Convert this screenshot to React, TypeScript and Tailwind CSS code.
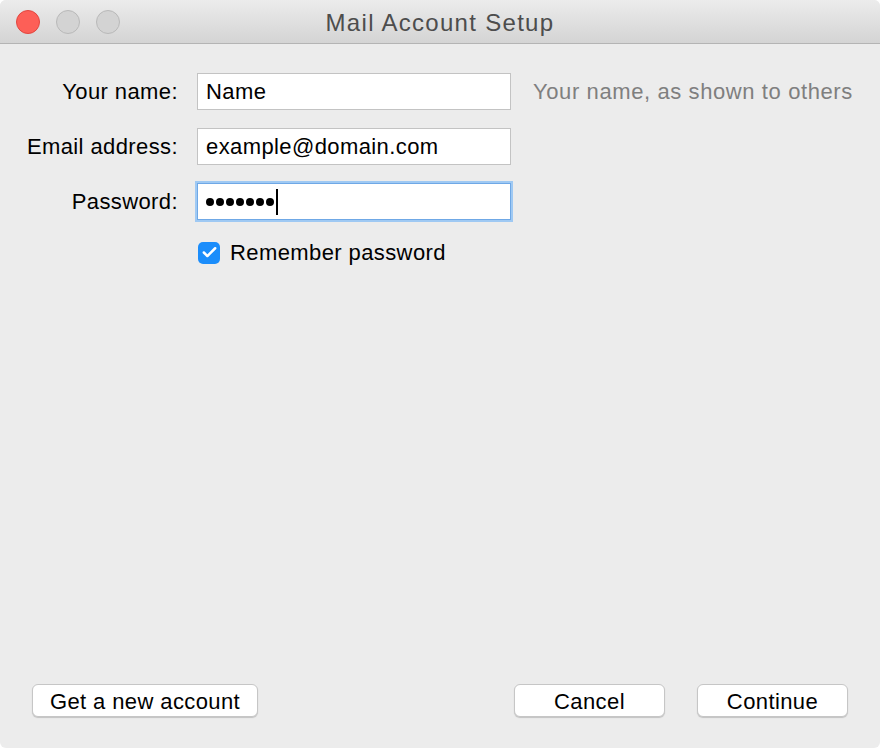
import { Check } from "lucide-react";

const font = { fontFamily: '"Liberation Sans", Arial, sans-serif' };

function Light({ color }: { color: "red" | "grey" }) {
  return (
    <span
      className={`block h-[24px] w-[24px] rounded-full border ${
        color === "red" ? "border-[#e2463f] bg-[#fd5f57]" : "border-[#b9b9b9] bg-[#d3d3d3]"
      }`}
    />
  );
}

function Field({ value }: { value: string }) {
  return (
    <div className="ml-[19px] flex h-[37px] w-[314px] items-center border border-[#c3c3c3] bg-white pl-[8px] text-black">
      {value}
    </div>
  );
}

function MacButton({ label, width }: { label: string; width: string }) {
  return (
    <button
      type="button"
      className={`${width} h-[33px] rounded-[6px] border border-[#c6c6c6] bg-white text-[22px] tracking-[0.4px] text-black shadow-[0_1px_1px_rgba(0,0,0,0.18)]`}
    >
      {label}
    </button>
  );
}

export default function App() {
  return (
    <div className="h-[748px] w-[880px] bg-white" style={font}>
      <div className="flex h-full flex-col overflow-hidden rounded-[6px] bg-[#ececec]">
        <header className="relative flex h-[44px] shrink-0 items-center border-b border-[#b4b4b4] bg-gradient-to-b from-[#ececec] to-[#d4d4d4] pl-[16px]">
          <div className="flex gap-[16px]">
            <Light color="red" />
            <Light color="grey" />
            <Light color="grey" />
          </div>
          <h1 className="absolute inset-x-0 top-[5px] text-center text-[24px] tracking-[1.3px] text-[#4d4d4d]">
            Mail Account Setup
          </h1>
        </header>

        <main className="flex flex-1 flex-col pt-[29px] text-[22px] tracking-[0.4px] text-black">
          <div className="flex flex-col gap-[18px]">
            <div className="flex items-center">
              <label className="w-[178px] text-right">Your name:</label>
              <Field value="Name" />
              <span className="ml-[22px] tracking-[0.6px] text-[#7f7f7f]">Your name, as shown to others</span>
            </div>
            <div className="flex items-center">
              <label className="w-[178px] text-right">Email address:</label>
              <Field value="example@domain.com" />
            </div>
            <div className="flex items-center">
              <label className="w-[178px] text-right">Password:</label>
              <div className="ml-[19px] flex h-[37px] w-[314px] items-center border border-[#6fa8e6] bg-white pl-[8px] shadow-[0_0_0_2px_#9fc9f3]">
                <div className="flex gap-[2px]" aria-label="password">
                  {Array.from({ length: 7 }).map((_, i) => (
                    <span key={i} className="block h-[8px] w-[8px] rounded-full bg-black" />
                  ))}
                </div>
                <span className="ml-[2px] h-[26px] w-[2px] bg-black" />
              </div>
            </div>
          </div>

          <div className="mt-[16px] flex items-center pl-[198px]">
            <span className="flex h-[22px] w-[22px] items-center justify-center rounded-[5px] bg-[#1b8dfb]">
              <Check size={17} strokeWidth={3.5} color="white" />
            </span>
            <span className="ml-[10px]">Remember password</span>
          </div>

          <div className="mt-auto flex items-center px-[32px] pb-[31px]">
            <MacButton label="Get a new account" width="w-[226px]" />
            <div className="ml-auto flex gap-[32px]">
              <MacButton label="Cancel" width="w-[151px]" />
              <MacButton label="Continue" width="w-[151px]" />
            </div>
          </div>
        </main>
      </div>
    </div>
  );
}
